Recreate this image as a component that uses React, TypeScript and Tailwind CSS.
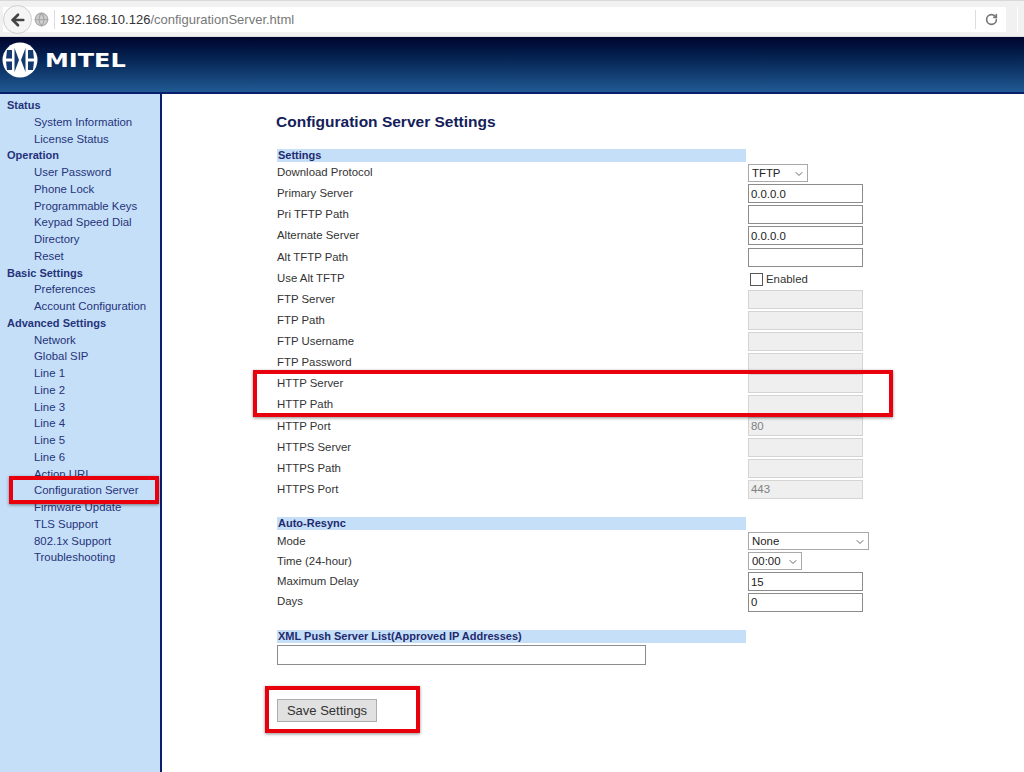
import React from 'react';
import { ArrowLeft, ChevronDown, Globe, RotateCw } from 'lucide-react';

type Row = {
  label: string;
  value?: string;
  kind?: 'text' | 'disabled' | 'select' | 'check';
  width?: string;
};

const navGroups = [
  { title: 'Status', items: ['System Information', 'License Status'] },
  { title: 'Operation', items: ['User Password', 'Phone Lock', 'Programmable Keys', 'Keypad Speed Dial', 'Directory', 'Reset'] },
  { title: 'Basic Settings', items: ['Preferences', 'Account Configuration'] },
  {
    title: 'Advanced Settings',
    items: ['Network', 'Global SIP', 'Line 1', 'Line 2', 'Line 3', 'Line 4', 'Line 5', 'Line 6', 'Action URI', 'Configuration Server', 'Firmware Update', 'TLS Support', '802.1x Support', 'Troubleshooting'],
  },
];

const settingsRows: Row[] = [
  { label: 'Download Protocol', value: 'TFTP', kind: 'select', width: 'w-[60px]' },
  { label: 'Primary Server', value: '0.0.0.0' },
  { label: 'Pri TFTP Path' },
  { label: 'Alternate Server', value: '0.0.0.0' },
  { label: 'Alt TFTP Path' },
  { label: 'Use Alt TFTP', kind: 'check' },
  { label: 'FTP Server', kind: 'disabled' },
  { label: 'FTP Path', kind: 'disabled' },
  { label: 'FTP Username', kind: 'disabled' },
  { label: 'FTP Password', kind: 'disabled' },
  { label: 'HTTP Server', kind: 'disabled' },
  { label: 'HTTP Path', kind: 'disabled' },
  { label: 'HTTP Port', value: '80', kind: 'disabled' },
  { label: 'HTTPS Server', kind: 'disabled' },
  { label: 'HTTPS Path', kind: 'disabled' },
  { label: 'HTTPS Port', value: '443', kind: 'disabled' },
];

const resyncRows: Row[] = [
  { label: 'Mode', value: 'None', kind: 'select', width: 'w-[121px]' },
  { label: 'Time (24-hour)', value: '00:00', kind: 'select', width: 'w-[54px]' },
  { label: 'Maximum Delay', value: '15' },
  { label: 'Days', value: '0' },
];

const MitelLogo = () => (
  <svg width="36" height="36" viewBox="0 0 36 36" className="shrink-0">
    <circle cx="18" cy="18" r="17.5" fill="#ffffff" />
    <path d="M5 8h5v8.500H4zM4 19.500h6V28H5zM26 8h5l1 8.500h-6zM26 19.500h6L31 28h-5z" fill="#143a70" />
    <path d="M12.500 6L17 18l-4.500 12zM23.500 6L19 18l4.500 12z" fill="#143a70" />
  </svg>
);

const Field = ({ row }: { row: Row }) => {
  if (row.kind === 'check') {
    return (
      <label className="flex items-center h-full pl-[2px] pt-[3px] text-[#333333]">
        <input type="checkbox" className="appearance-none w-[13px] h-[13px] bg-white border border-[#555555] mr-[3px]" />
        Enabled
      </label>
    );
  }
  if (row.kind === 'select') {
    return (
      <div className={`relative h-[18px] ${row.width}`}>
        <select className="appearance-none w-full h-full bg-white border border-[#a9a9a9] pl-[3px] text-[#222222] outline-none">
          <option>{row.value}</option>
        </select>
        <ChevronDown className="absolute right-[3px] top-[4px] w-[12px] h-[12px] text-[#555555]" strokeWidth={1.75} />
      </div>
    );
  }
  const disabled = row.kind === 'disabled';
  return (
    <input
      readOnly
      value={row.value ?? ''}
      className={
        disabled
          ? 'w-[115px] h-[19px] bg-[#efefef] border border-[#d4d4d4] px-[2px] text-[#808080] outline-none'
          : 'w-[115px] h-[19px] bg-white border border-[#8c8c8c] px-[2px] text-[#222222] outline-none'
      }
    />
  );
};

const FormRows = ({ rows, pitch }: { rows: Row[]; pitch: string }) => (
  <div className="flex flex-col">
    {rows.map((row) => (
      <div key={row.label} className={`flex items-center ${pitch}`}>
        <span className="w-[471px] shrink-0 text-[#333333]">{row.label}</span>
        <Field row={row} />
      </div>
    ))}
  </div>
);

const SectionBar = ({ title }: { title: string }) => (
  <div className="w-[469px] h-[13px] leading-[13px] bg-[#c5dff8] pl-px text-[11px] font-bold text-[#1f2a6e]">{title}</div>
);

const RedBox = ({ className }: { className: string }) => (
  <div className={`absolute border-[4px] border-[#e8000d] shadow-[0_1px_3px_rgba(0,0,0,0.45)] ${className}`} />
);

export default function App() {
  return (
    <div className="relative w-[1024px] h-[772px] overflow-hidden bg-white text-[11.400px] font-['Liberation_Sans',Arial,sans-serif]">
      {/* Browser bar */}
      <div className="flex items-center h-[37px] bg-[#f1f1f1] border-t border-t-[#d9d9d9] border-b border-b-[#dedede] pl-[3px] pr-[6px] pt-[2px]">
        <div className="flex items-center flex-1 h-[25px] bg-white">
          <div className="flex items-center justify-center w-[29px] h-[29px] rounded-full bg-[#f5f5f5] border border-[#cfcfcf]">
            <ArrowLeft className="w-[18px] h-[18px] text-[#444444]" strokeWidth={3.5} />
          </div>
          <Globe className="ml-[2px] w-[15px] h-[15px] text-[#a8a8a8] fill-[#d0d0d0]" strokeWidth={2} />
          <div className="ml-[5px] w-px h-[19px] bg-[#dddddd]" />
          <span className="ml-[5px] text-[13px] text-[#333333]">
            192.168.10.126<span className="text-[#777777]">/configurationServer.html</span>
          </span>
          <div className="ml-auto w-px h-[19px] bg-[#dddddd]" />
          <div className="flex items-center justify-center w-[30px]">
            <RotateCw className="w-[13px] h-[13px] text-[#777777]" strokeWidth={3} />
          </div>
        </div>
        <div className="ml-[11px] w-px h-[25px] bg-white" />
      </div>

      {/* Header */}
      <div className="flex items-center h-[57px] pl-[2px] pb-[9px] border-b-2 border-b-[#0a1f6b] bg-gradient-to-b from-[#01052e] to-[#215a94]">
        <MitelLogo />
        <span className="ml-[7px] text-[19px] leading-none font-['DejaVu_Sans',sans-serif] font-bold text-white origin-left scale-x-[1.26]">MITEL</span>
      </div>

      <div className="flex h-[678px]">
        {/* Sidebar */}
        <div className="w-[162px] shrink-0 bg-[#c5dff8] border-r-2 border-r-[#0a1f6b] pt-[3px] pl-[7px] text-[#25337a]">
          {navGroups.map((group) => (
            <div key={group.title}>
              <div className="h-[16.750px] leading-[16.750px] text-[11px] font-bold">{group.title}</div>
              {group.items.map((item) => (
                <div key={item} className="h-[16.750px] leading-[16.750px] pl-[27px]">{item}</div>
              ))}
            </div>
          ))}
        </div>

        {/* Main */}
        <div className="flex-1 pl-[115px]">
          <h1 className="mt-[19px] -ml-px text-[15.500px] leading-[18px] font-bold text-[#14205a]">Configuration Server Settings</h1>
          <div className="mt-[18px]">
            <SectionBar title="Settings" />
            <FormRows rows={settingsRows} pitch="h-[21.130px]" />
          </div>
          <div className="mt-[17px]">
            <SectionBar title="Auto-Resync" />
            <div className="mt-px">
              <FormRows rows={resyncRows} pitch="h-[20.300px]" />
            </div>
          </div>
          <div className="mt-[18px]">
            <SectionBar title="XML Push Server List(Approved IP Addresses)" />
            <input readOnly className="block mt-[2px] w-[369px] h-[20px] bg-white border border-[#8c8c8c] outline-none" />
          </div>
          <button className="block mt-[34px] w-[100px] h-[23px] bg-[#e1e1e1] border border-[#adadad] text-[13px] text-[#333333]">Save Settings</button>
        </div>
      </div>

      {/* Screenshot annotations */}
      <RedBox className="left-[9px] top-[476px] w-[150px] h-[28px]" />
      <RedBox className="left-[253px] top-[370px] w-[640px] h-[47px]" />
      <RedBox className="left-[265px] top-[686px] w-[155px] h-[47px]" />
    </div>
  );
}
